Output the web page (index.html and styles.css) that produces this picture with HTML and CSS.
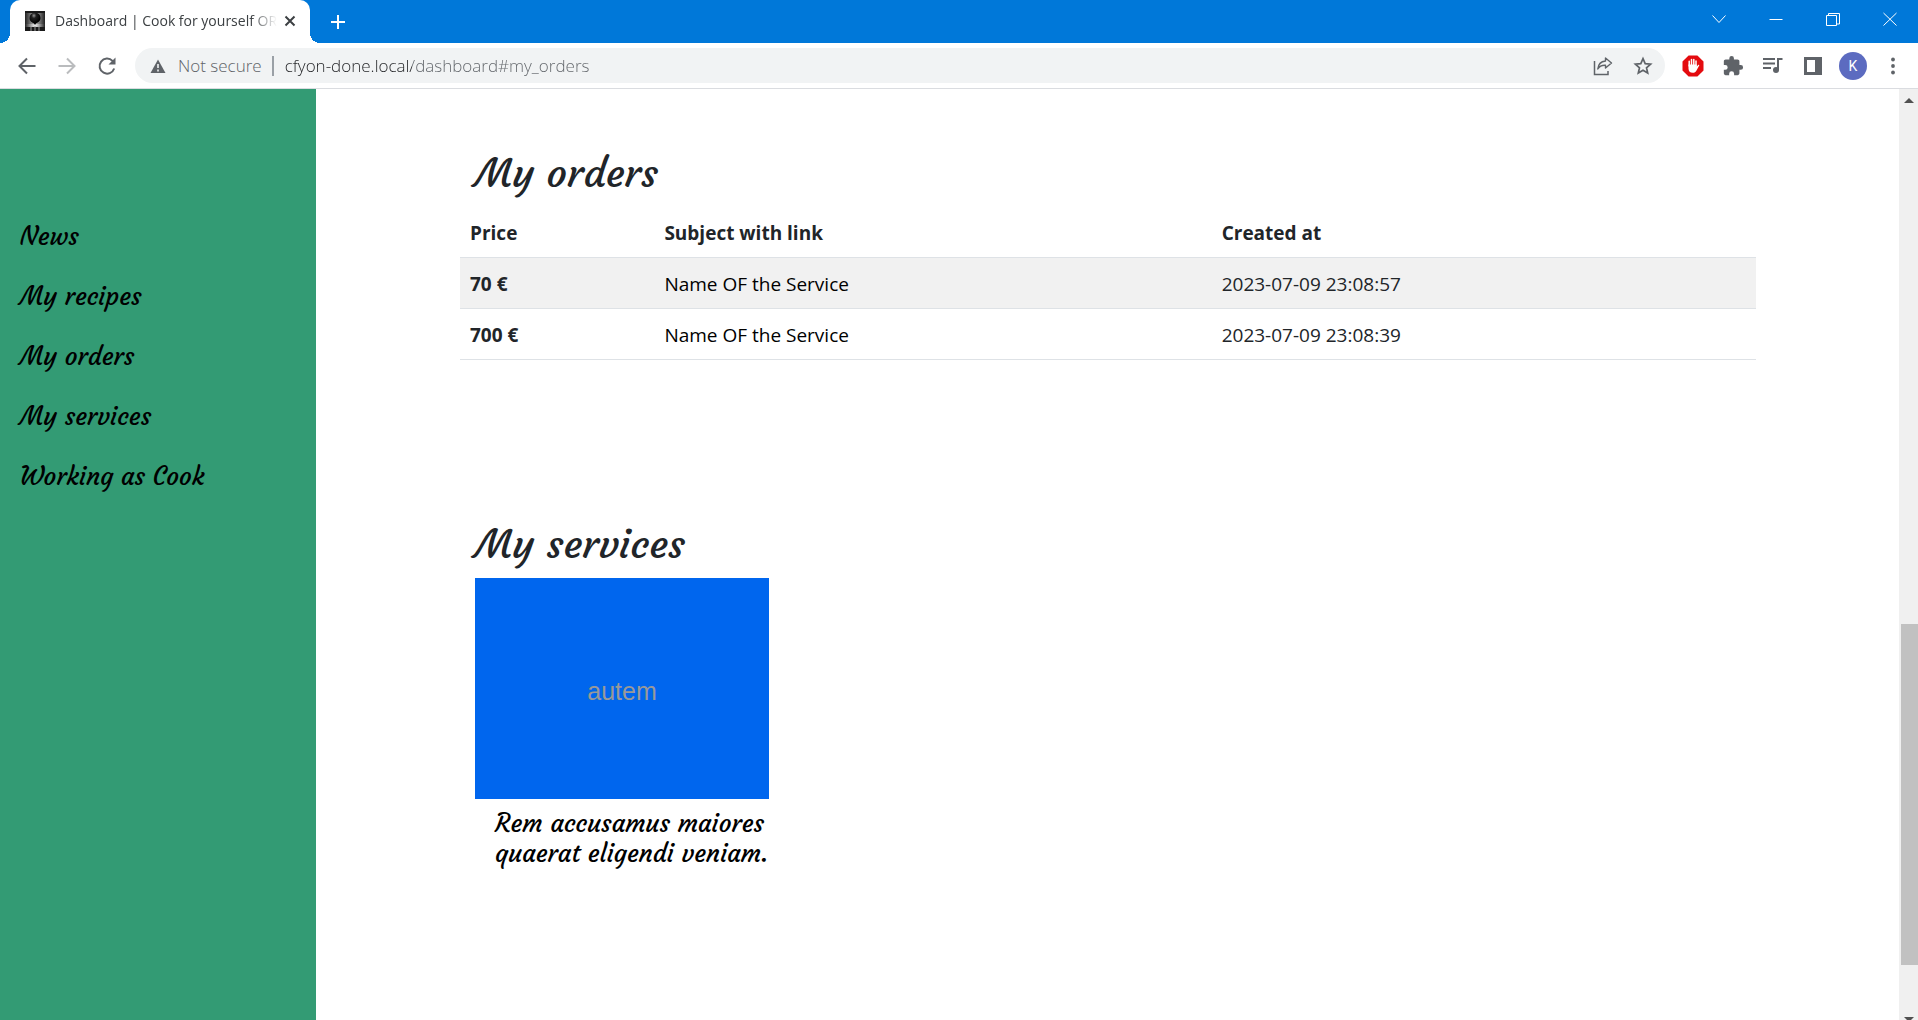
FILE: index.html
```html
<!DOCTYPE html>
<html lang="en">
<head>
<meta charset="utf-8">
<meta name="viewport" content="width=device-width, initial-scale=1">
<title>Dashboard | Cook for yourself OR</title>
<link rel="stylesheet" href="styles.css">
</head>
<body>
<header class="browser">
  <div class="tabstrip">
    <div class="tab">
      <svg class="favicon" width="20" height="20" viewBox="0 0 20 20" aria-hidden="true">
        <defs>
          <linearGradient id="glow" x1="0" x2="1"><stop offset="0" stop-color="#222"/><stop offset=".3" stop-color="#aaa"/><stop offset=".5" stop-color="#eee"/><stop offset=".7" stop-color="#aaa"/><stop offset="1" stop-color="#222"/></linearGradient>
          <radialGradient id="ball" cx="40%" cy="25%" r="60%"><stop offset="0" stop-color="#999"/><stop offset=".35" stop-color="#222"/><stop offset="1" stop-color="#000"/></radialGradient>
        </defs>
        <rect width="20" height="20" fill="#1a1a1a"/>
        <rect y="2" width="20" height="12" fill="url(#glow)" opacity=".7"/>
        <rect y="13" width="20" height="3" fill="url(#glow)"/>
        <path d="M4.500 7a5.500 5.500 0 0 1 11 0c0 3.500-3 4.500-4.500 5.500l-1 1.500-1-1.500C7.500 11.500 4.500 10.500 4.500 7z" fill="url(#ball)"/>
        <path d="M6 16v4M10 15v5M14 16v4" stroke="#999"/>
      </svg>
      <span class="tab-title">Dashboard | Cook for yourself OR</span>
      <button class="icon-button tab-close" aria-label="Close tab">
        <svg width="12" height="12" viewBox="0 0 12 12"><path d="M1.500 1.500l9 9M10.500 1.500l-9 9" stroke="#3c4043" stroke-width="2"/></svg>
      </button>
    </div>
    <button class="icon-button new-tab" aria-label="New tab">
      <svg width="16" height="16" viewBox="0 0 16 16"><path d="M8 1v14M1 8h14" stroke="#fff" stroke-width="2"/></svg>
    </button>
    <div class="window-buttons">
      <button class="icon-button" aria-label="Search tabs"><svg width="14" height="14" viewBox="0 0 14 14"><path d="M.5 3.500l6.500 7 6.500-7" fill="none" stroke="#fff"/></svg></button>
      <button class="icon-button" aria-label="Minimize"><svg width="14" height="14" viewBox="0 0 14 14"><path d="M.5 7.500h13" stroke="#fff"/></svg></button>
      <button class="icon-button" aria-label="Restore"><svg width="14" height="14" viewBox="0 0 14 14"><path d="M.5 3.500h10v10h-10zM2.500 3V1.500h11v10.500H11" fill="none" stroke="#fff"/></svg></button>
      <button class="icon-button" aria-label="Close"><svg width="14" height="14" viewBox="0 0 14 14"><path d="M.5 1l13 12.500M13.500 1l-13 12.500" stroke="#fff"/></svg></button>
    </div>
  </div>
  <div class="toolbar">
    <div class="nav-buttons">
      <button class="icon-button" aria-label="Back"><svg width="20" height="20" viewBox="0 0 20 20"><path d="M18.500 10H3M10 2.500L2.500 10l7.500 7.500" fill="none" stroke="#5f6368" stroke-width="2"/></svg></button>
      <button class="icon-button" aria-label="Forward"><svg width="20" height="20" viewBox="0 0 20 20"><path d="M1.500 10H17M10 2.500l7.500 7.500-7.500 7.500" fill="none" stroke="#babcbe" stroke-width="2"/></svg></button>
      <button class="icon-button" aria-label="Reload"><svg width="20" height="20" viewBox="0 0 20 20"><path d="M17.200 12.500A7.500 7.500 0 1 1 15.500 4.900L17 6.500" fill="none" stroke="#5f6368" stroke-width="2"/><path d="M18.500 1.500v7h-7z" fill="#5f6368"/></svg></button>
    </div>
    <div class="omnibox">
      <svg width="16" height="16" viewBox="0 0 16 16" aria-hidden="true"><path d="M8 1.500L15.500 15H.5z" fill="#5f6368"/><path d="M8 6v4M8 11.500v2" stroke="#f1f3f4" stroke-width="1.600"/></svg>
      <label class="security" for="address">Not secure</label>
      <input class="address" id="address" type="text" value="cfyon-done.local/dashboard#my_orders">
      <button class="icon-button" aria-label="Share"><svg width="20" height="20" viewBox="0 0 20 20"><path d="M1.500 5v13.500H15V15" fill="none" stroke="#5f6368" stroke-width="1.500"/><path d="M12.500 2l6 5-6 5V9.200C9 9 6.500 10 4.800 13c.4-4.500 3.200-7.500 7.700-8z" fill="none" stroke="#5f6368" stroke-width="1.400" stroke-linejoin="round"/></svg></button>
      <button class="icon-button" aria-label="Bookmark"><svg width="20" height="20" viewBox="0 0 20 20"><path d="M10 2.700l2.200 5 5.400.5-4.100 3.600 1.200 5.300L10 14.300l-4.700 2.800 1.200-5.300-4.100-3.600 5.400-.5z" fill="none" stroke="#5f6368" stroke-width="1.700"/></svg></button>
    </div>
    <div class="extensions">
      <button class="icon-button" aria-label="AdBlock"><svg width="22" height="22" viewBox="0 0 22 22"><path d="M6.600.5h8.800l6.100 6.100v8.800l-6.100 6.100H6.600L.5 15.400V6.600z" fill="#e40b0f"/><path d="M7.200 11V6.300M9.500 11V4.500M11.800 11V4.500M14 11V6" stroke="#fff" stroke-width="1.500" stroke-linecap="round"/><path d="M6.500 9.500h8.200v2l1.500-1.600c.8-.4 1.300.2.900.9l-2.600 4.700c-.8 1.600-2 2.300-3.700 2.300-2.800 0-4.300-1.700-4.300-4.400z" fill="#fff"/></svg></button>
      <button class="icon-button" aria-label="Extensions"><svg width="22" height="22" viewBox="0 0 24 24"><path fill="#5f6368" d="M20.500 11H19V7c0-1.100-.9-2-2-2h-4V3.500a2.500 2.500 0 0 0-5 0V5H4c-1.100 0-2 .9-2 2v3.800h1.500a2.700 2.700 0 0 1 0 5.400H2V20c0 1.100.9 2 2 2h3.800v-1.500a2.700 2.700 0 0 1 5.400 0V22H17c1.100 0 2-.9 2-2v-4h1.500a2.500 2.500 0 0 0 0-5z"/></svg></button>
      <button class="icon-button" aria-label="Media"><svg width="22" height="22" viewBox="0 0 22 22"><path d="M1 4h12M1 8.500h12M1 13h8" stroke="#5f6368" stroke-width="2"/><path d="M20.500 4H16v11" fill="none" stroke="#5f6368" stroke-width="2"/><circle cx="14" cy="15" r="3" fill="#5f6368"/></svg></button>
      <button class="icon-button" aria-label="Side panel"><svg width="22" height="22" viewBox="0 0 22 22"><path d="M2 2h18v18H2zm3 3v12h8V5z" fill="#5f6368" fill-rule="evenodd"/></svg></button>
      <button class="avatar" aria-label="Profile K">K</button>
      <button class="icon-button" aria-label="Menu"><svg width="20" height="20" viewBox="0 0 20 20" fill="#5f6368"><circle cx="10" cy="3.500" r="1.900"/><circle cx="10" cy="10" r="1.900"/><circle cx="10" cy="16.500" r="1.900"/></svg></button>
    </div>
  </div>
</header>
<div class="page">
  <nav class="sidebar">
    <a href="#news">News</a>
    <a href="#my_recipes">My recipes</a>
    <a href="#my_orders">My orders</a>
    <a href="#my_services">My services</a>
    <a href="#working">Working as Cook</a>
  </nav>
  <main class="content">
    <section class="orders" id="my_orders">
      <h1>My orders</h1>
      <table>
        <colgroup><col class="col-price"><col class="col-subject"><col></colgroup>
        <thead>
          <tr><th scope="col">Price</th><th scope="col">Subject with link</th><th scope="col">Created at</th></tr>
        </thead>
        <tbody>
          <tr><th scope="row">70 €</th><td><a href="#service-70">Name OF the Service</a></td><td>2023-07-09 23:08:57</td></tr>
          <tr><th scope="row">700 €</th><td><a href="#service-700">Name OF the Service</a></td><td>2023-07-09 23:08:39</td></tr>
        </tbody>
      </table>
    </section>
    <section class="services" id="my_services">
      <h1>My services</h1>
      <a class="card" href="#autem">
        <span class="card-image">autem</span>
        <span class="card-title">Rem accusamus maiores quaerat eligendi veniam.</span>
      </a>
    </section>
  </main>
  <div class="scrollbar" aria-hidden="true">
    <svg class="arrow-up" width="19" height="19" viewBox="0 0 19 19"><path d="M5 14l5-5 5 5z" fill="#505050"/></svg>
    <div class="track-before"></div>
    <div class="thumb"></div>
    <div class="track-after"></div>
    <svg class="arrow-down" width="19" height="12" viewBox="0 0 19 12"><path d="M5 9h10l-5 5z" fill="#505050"/></svg>
  </div>
</div>
</body>
</html>
```
FILE: styles.css
```css
* { box-sizing: border-box; }

body {
  margin: 0;
  min-height: 100vh;
  display: flex;
  flex-direction: column;
  background: #fff;
  color: #212529;
  font-family: "Segoe UI", "Open Sans", sans-serif;
  font-size: 19px;
}

a { color: #000; text-decoration: none; }

button {
  border: 0;
  padding: 0;
  background: none;
  font: inherit;
}

.icon-button { display: flex; align-items: center; justify-content: center; }

/* Browser frame */
.tabstrip {
  display: flex;
  align-items: center;
  height: 43px;
  padding-left: 10px;
  background: #0078d9;
}

.tab {
  position: relative;
  display: flex;
  align-items: center;
  width: 300px;
  height: 43px;
  padding: 0 14px 2px 15px;
  border-radius: 10px 10px 0 0;
  background: #fff;
}

.tab::before,
.tab::after {
  content: "";
  position: absolute;
  bottom: 0;
  width: 10px;
  height: 10px;
}

.tab::before { right: 100%; background: radial-gradient(circle at 0 0, #0078d9 10px, #fff 10px); }
.tab::after { left: 100%; background: radial-gradient(circle at 100% 0, #0078d9 10px, #fff 10px); }

.tab-title {
  flex: 1;
  min-width: 0;
  margin: 0 5px 0 10px;
  white-space: nowrap;
  font-size: 14px;
  color: #3c4043;
  mask-image: linear-gradient(to right, #000 196px, transparent 222px);
}

.new-tab { width: 32px; height: 32px; margin-left: 12px; }

.window-buttons { display: flex; margin-left: auto; padding-bottom: 6px; }
.window-buttons .icon-button { width: 57px; height: 36px; }

.toolbar {
  display: flex;
  align-items: center;
  height: 46px;
  padding: 0 15px 0 17px;
  border-bottom: 1px solid #dadce0;
}

.nav-buttons { display: flex; gap: 20px; }

.omnibox {
  flex: 1;
  display: flex;
  align-items: center;
  height: 35px;
  margin-left: 18px;
  padding: 0 12px 0 15px;
  border-radius: 18px;
  background: #f1f3f4;
  font-size: 17px;
  font-weight: 300;
  color: #5f6368;
}

.security {
  margin-left: 12px;
  padding-right: 10px;
  border-right: 2px solid #9aa0a6;
  line-height: 20px;
}

/* The host is darker than the path that follows it. */
.address {
  flex: 1;
  min-width: 0;
  padding: 0 0 0 11px;
  border: 0;
  outline: 0;
  font: inherit;
  color: transparent;
  background: linear-gradient(to right, #202124 138px, #5f6368 138px);
  background-clip: text;
}

.omnibox .icon-button + .icon-button { margin-left: 20px; }

.extensions { display: flex; align-items: center; gap: 18px; margin-left: 17px; }

.avatar {
  width: 28px;
  height: 28px;
  margin: 0 -2px 0 -3px;
  border-radius: 50%;
  background: #5c6bc0;
  color: #fff;
  font-family: Roboto, sans-serif;
  font-size: 14px;
}

/* Dashboard */
.page { flex: 1; display: flex; }

.sidebar {
  display: flex;
  flex-direction: column;
  width: 316px;
  padding: 118px 20px 0;
  background: #339b74;
}

.sidebar a,
h1,
.card-title {
  font-family: "Courgette", "Lato", cursive;
}

.sidebar a { font-size: 25px; line-height: 60px; }

.content { flex: 1; padding: 60px 143px 0 144px; }

h1 {
  margin: 0;
  padding-left: 15px;
  font-size: 40px;
  font-weight: 500;
  line-height: 48px;
}

.orders h1 { margin-bottom: 9px; }

table { width: 100%; table-layout: fixed; border-collapse: collapse; }
.col-price { width: 15%; }
.col-subject { width: 43%; }

th, td {
  height: 51px;
  padding: 2px 10px 0;
  border-bottom: 1px solid #dee2e6;
  text-align: left;
}

thead th { padding-top: 4px; }

tbody tr:nth-child(odd) { background: #f1f1f1; }

.services { margin-top: 160px; }

.card { display: block; width: 294px; margin: 10px 0 0 15px; }

.card-image {
  display: flex;
  align-items: center;
  justify-content: center;
  height: 221px;
  padding-top: 7px;
  background: #0066ee;
  color: #999;
  font-family: "Liberation Sans", Arial, sans-serif;
  font-size: 25px;
}

.card-title {
  display: block;
  padding: 10px 0 0 20px;
  font-size: 25px;
  line-height: 30px;
}

/* Scrollbar */
.scrollbar {
  display: flex;
  flex-direction: column;
  width: 19px;
  background: #f0f0f0;
}

.track-before { flex: 516; }
.thumb { flex: 341; margin-left: 2px; background: #c1c1c1; }
.track-after { flex: 43; }
```
